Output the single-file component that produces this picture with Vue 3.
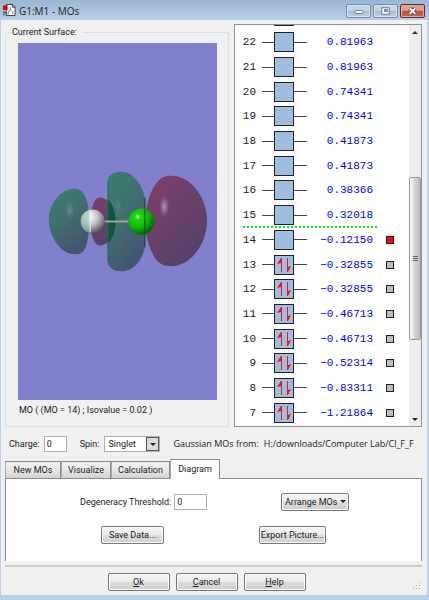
<template>
  <div class="window">
    <header class="titlebar">
      <svg class="app-icon" viewBox="0 0 14 14" aria-hidden="true">
        <path d="M3.500 1h7l2.500 2.500v9.500h-9.500z" fill="#fff" stroke="#333" />
        <path d="M10 1v3h3" fill="none" stroke="#333" />
        <path d="M8 4v3l-2.500 2v3M8 7l2.500 2v3" fill="none" stroke="#777" />
        <path d="M0 2h5v5h-5z" fill="#e00000" />
        <path d="M1 8v5M2 10h2" stroke="#333" />
      </svg>
      <h1 class="title">G1:M1 - MOs</h1>
      <div class="controls">
        <button type="button" class="control" aria-label="Minimize">
          <svg viewBox="0 0 24 13"><rect x="8" y="6" width="9" height="3" rx="1" fill="#fff" stroke="#666f7a" /></svg>
        </button>
        <button type="button" class="control" aria-label="Maximize">
          <svg viewBox="0 0 24 13">
            <rect x="8" y="3" width="8" height="7" fill="#fff" stroke="#666f7a" />
            <rect x="11" y="5" width="3" height="2" fill="#9fb3c8" stroke="#666f7a" />
          </svg>
        </button>
        <button type="button" class="control close" aria-label="Close">
          <svg viewBox="0 0 24 13">
            <path d="M9 3.500l6 6M15 3.500l-6 6" stroke="#5b3a3a" stroke-width="4" />
            <path d="M9 3.500l6 6M15 3.500l-6 6" stroke="#fff" stroke-width="2" />
          </svg>
        </button>
      </div>
    </header>

    <main class="body">
      <div class="top">
        <fieldset class="surface">
          <legend>Current Surface:</legend>
          <svg class="canvas" viewBox="0 0 200 356" role="img" aria-label="Molecular orbital surface">
            <defs>
              <linearGradient id="green" x1="0" y1="0" x2="0.500" y2="1">
                <stop offset="0" stop-color="#397f6a" />
                <stop offset="0.500" stop-color="#40706f" />
                <stop offset="1" stop-color="#435570" />
              </linearGradient>
              <linearGradient id="pink" x1="0" y1="0" x2="0.700" y2="1">
                <stop offset="0" stop-color="#823d68" />
                <stop offset="0.500" stop-color="#6b4069" />
                <stop offset="1" stop-color="#51426a" />
              </linearGradient>
              <radialGradient id="shine">
                <stop offset="0" stop-color="#b3aed0" stop-opacity="0.800" />
                <stop offset="1" stop-color="#9a8fb5" stop-opacity="0" />
              </radialGradient>
              <radialGradient id="white-ball" cx="0.380" cy="0.300" r="0.750">
                <stop offset="0" stop-color="#ffffff" />
                <stop offset="0.450" stop-color="#c4c4c4" />
                <stop offset="1" stop-color="#4c4950" />
              </radialGradient>
              <radialGradient id="green-ball" cx="0.360" cy="0.320" r="0.750">
                <stop offset="0" stop-color="#b8ff9c" />
                <stop offset="0.150" stop-color="#20d515" />
                <stop offset="0.550" stop-color="#10b80a" />
                <stop offset="1" stop-color="#075306" />
              </radialGradient>
              <clipPath id="mid-lobe">
                <path d="M90 137C92 130 97 128 104 128C117 128 128 145 128 161V196C128 215 117 228 104 228C96 228 91 225 90 218Z" />
              </clipPath>
            </defs>
            <path d="M57 145C65 145 68 152 70 160C72 170 72 186 70 196C68 207 65 211 57 211C43 211 31 193 31 176C31 160 43 145 57 145Z" fill="url(#green)" />
            <path d="M82 154C91 154 98 165 98 178S91 202 82 202C76 202 73 190 73 178S76 154 82 154Z" fill="url(#pink)" />
            <path d="M90 137C92 130 97 128 104 128C117 128 128 145 128 161V196C128 215 117 228 104 228C96 228 91 225 90 218Z" fill="url(#green)" />
            <g clip-path="url(#mid-lobe)">
              <ellipse cx="84" cy="178" rx="14" ry="25" fill="#0c563b" />
              <path d="M90 137V218" stroke="#087044" stroke-width="2" />
            </g>
            <path d="M154 132C174 132 190 154 190 177C190 201 173 223 154 223C144 223 140 219 136 212C131 201 128 193 128 178C128 165 132 149 138 141C143 134 147 132 154 132Z" fill="url(#pink)" />
            <ellipse cx="52" cy="167" rx="5" ry="9" fill="url(#shine)" opacity="0.500" />
            <ellipse cx="147" cy="163" rx="5" ry="11" fill="url(#shine)" />
            <ellipse cx="101" cy="163" rx="5" ry="12" fill="url(#shine)" opacity="0.200" />
            <path d="M87 178h24" stroke="#a1a596" stroke-width="2" />
            <circle cx="75" cy="178" r="12" fill="url(#white-ball)" />
            <path d="M72 166.500A12 12 0 0 0 72 189.500Z" fill="#87c4ad" opacity="0.550" />
            <path d="M72.500 167v22" stroke="#d8ffff" />
            <circle cx="124" cy="178" r="13" fill="url(#green-ball)" />
            <path d="M127.500 154v50" stroke="#0b4b2b" />
          </svg>
          <p class="caption">MO ( (MO = 14) ; Isovalue = 0.02 )</p>
        </fieldset>

        <section class="levels" aria-label="Orbital energies">
          <div class="rows">
            <div class="cut-off"></div>
            <div
              v-for="mo in orbitals"
              :key="mo.id"
              class="row"
              :class="{ lumo: mo.id === 15 }"
            >
              <span class="number">{{ mo.id }}</span>
              <span class="level">
                <span class="box">
                  <svg v-if="mo.id < 14" viewBox="0 0 18 18" aria-hidden="true">
                    <path d="M6 16V2h1v14zM6 2v5l-4 1z" />
                    <path d="M12 2v14h1V2zM13 16v-5l3-1z" />
                  </svg>
                </span>
              </span>
              <span class="energy">{{ mo.energy }}</span>
              <button
                v-if="mo.id <= 14"
                type="button"
                class="marker"
                :class="{ active: mo.id === 14 }"
                :aria-label="`Show orbital ${mo.id}`"
              ></button>
            </div>
          </div>
          <div class="scrollbar">
            <span class="arrow up"></span>
            <div class="track">
              <div class="thumb"><i></i><i></i><i></i></div>
            </div>
            <span class="arrow down"></span>
          </div>
        </section>
      </div>

      <div class="settings">
        <label for="charge">Charge:</label>
        <input id="charge" v-model="charge" class="field charge" type="text" />
        <label for="spin">Spin:</label>
        <div class="select">
          <select id="spin" v-model="spin">
            <option>Singlet</option>
            <option>Triplet</option>
          </select>
          <span class="drop"></span>
        </div>
        <p class="source"><span>Gaussian MOs from:</span><span>H:/downloads/Computer Lab/Cl_F_F</span></p>
      </div>

      <nav class="tabs" role="tablist">
        <button
          v-for="tab in tabs"
          :key="tab"
          type="button"
          role="tab"
          class="tab"
          :class="{ selected: tab === current }"
          :aria-selected="tab === current"
          @click="current = tab"
        >{{ tab }}</button>
      </nav>

      <section class="panel" role="tabpanel">
        <div class="line">
          <label for="threshold">Degeneracy Threshold:</label>
          <input id="threshold" v-model="threshold" class="field threshold" type="text" />
          <button type="button" class="button arrange">Arrange MOs <span class="caret"></span></button>
        </div>
        <div class="line actions">
          <button type="button" class="button save">Save Data...</button>
          <button type="button" class="button export">Export Picture...</button>
        </div>
      </section>

      <footer class="footer">
        <button type="button" class="button"><u>O</u>k</button>
        <button type="button" class="button"><u>C</u>ancel</button>
        <button type="button" class="button"><u>H</u>elp</button>
        <svg class="grip" viewBox="0 0 8 8" aria-hidden="true">
          <path d="M6 0h1v1h-1zM3 3h1v1h-1zM6 3h1v1h-1zM0 6h1v1h-1zM3 6h1v1h-1zM6 6h1v1h-1z" fill="#aaa" />
        </svg>
      </footer>
    </main>
  </div>
</template>

<script setup>
import { ref } from 'vue'

const charge = ref('0')
const spin = ref('Singlet')
const threshold = ref('0')
const tabs = ['New MOs', 'Visualize', 'Calculation', 'Diagram']
const current = ref('Diagram')

const orbitals = [
  { id: 22, energy: '0.81963' },
  { id: 21, energy: '0.81963' },
  { id: 20, energy: '0.74341' },
  { id: 19, energy: '0.74341' },
  { id: 18, energy: '0.41873' },
  { id: 17, energy: '0.41873' },
  { id: 16, energy: '0.38366' },
  { id: 15, energy: '0.32018' },
  { id: 14, energy: '−0.12150' },
  { id: 13, energy: '−0.32855' },
  { id: 12, energy: '−0.32855' },
  { id: 11, energy: '−0.46713' },
  { id: 10, energy: '−0.46713' },
  { id: 9, energy: '−0.52314' },
  { id: 8, energy: '−0.83311' },
  { id: 7, energy: '−1.21864' }
]
</script>

<style>
body {
  background: #b9d1ea;
}
</style>

<style scoped>
* {
  box-sizing: border-box;
}

.window {
  display: flex;
  flex-direction: column;
  min-height: 100vh;
  padding: 0 2px 5px 1px;
  background: #b9d1ea;
  font-family: Roboto, "Liberation Sans", Arial, sans-serif;
  font-size: 9px;
  line-height: 12px;
  color: #222;
}

button,
input,
select {
  margin: 0;
  padding: 0;
  font: inherit;
  color: inherit;
}

.titlebar {
  display: flex;
  align-items: center;
  height: 20px;
  margin: 0 -2px 0 -1px;
  padding: 0 3px;
  background: linear-gradient(#9bb6d1, #b8cfe8);
}

.app-icon {
  width: 13px;
  height: 14px;
}

.title {
  flex: 1;
  margin: 2px 0 0 3px;
  font: 10px/14px "Open Sans", sans-serif;
}

.controls {
  display: flex;
  gap: 2px;
  padding-top: 2px;
  margin-right: 1px;
}

.control {
  width: 25px;
  height: 14px;
  border: 1px solid #7589a0;
  border-radius: 2px;
  background: linear-gradient(#c5d6e8 45%, #a3bbd3 50%, #bbcfe4);
  box-shadow: inset 0 0 0 1px #d7e3ef;
}

.control svg {
  display: block;
  width: 100%;
  height: 100%;
}

.close {
  border-color: #6b2a24;
  background: linear-gradient(#dba193 45%, #c14a33 50%, #cf6b50);
  box-shadow: inset 0 0 0 1px #e2a99c;
}

.body {
  display: flex;
  flex: 1;
  flex-direction: column;
  padding: 4px 5px 0 4px;
  background: #f0f0f0;
}

.top {
  display: grid;
  grid-template-columns: minmax(0, 224fr) minmax(0, 188fr);
  gap: 5px;
  height: 403px;
}

.surface {
  display: flex;
  flex-direction: column;
  min-width: 0;
  margin: 2px 0 0;
  padding: 5px 11px 10px 12px;
  border: 1px solid #d7e0e6;
  border-radius: 2px;
}

.surface legend {
  margin-left: -6px;
  padding: 0 6px 0 0;
}

.canvas {
  flex: 1;
  width: 100%;
  min-height: 0;
  background: #8080cc;
}

.caption {
  margin: 4px 0 0 1px;
  white-space: nowrap;
}

.levels {
  display: flex;
  min-width: 0;
  border: 1px solid #8e929c;
  background: #fff;
}

.rows {
  display: flex;
  flex: 1;
  flex-direction: column;
  padding-bottom: 1px;
}

.cut-off {
  flex: none;
  width: 20px;
  height: 5px;
  margin-left: 39px;
  border-top: 1px solid #222;
}

.row {
  position: relative;
  display: flex;
  flex: 1;
  align-items: center;
  font-family: "Liberation Mono", monospace;
  font-size: 11px;
}

.lumo::after {
  content: '';
  position: absolute;
  bottom: 0;
  left: 8px;
  width: 135px;
  height: 2px;
  background: repeating-linear-gradient(90deg, #00f000 0 2px, #fff 2px 4px);
}

.number {
  width: 21px;
  text-align: right;
}

.level {
  width: 45px;
  margin-left: 6px;
  padding-left: 12px;
  background: linear-gradient(#444, #444) center / 100% 1px no-repeat;
}

.box {
  display: block;
  width: 20px;
  height: 20px;
  border: 1px solid #222;
  background: #9fbedf;
}

.box svg {
  display: block;
}

.box path {
  fill: #f50f18;
}

.energy {
  width: 66px;
  color: #0000ff;
  text-align: right;
}

.marker {
  width: 8px;
  height: 8px;
  margin-left: 13px;
  border: 1px solid #222;
  background: #bbb;
}

.active {
  background: #f00;
}

.scrollbar {
  display: flex;
  flex-direction: column;
  width: 12px;
  background: #eee;
}

.arrow {
  display: flex;
  align-items: center;
  justify-content: center;
  height: 14px;
}

.arrow::before,
.drop::before,
.caret {
  content: '';
  border: 3px solid transparent;
  border-top: 3px solid #222;
  border-bottom: 0;
}

.up::before {
  border-top: 0;
  border-bottom: 3px solid #333;
}

.track {
  flex: 1;
  padding-top: 138px;
}

.thumb {
  display: flex;
  flex-direction: column;
  gap: 1px;
  align-items: center;
  justify-content: center;
  height: 163px;
  border: 1px solid #999;
  border-radius: 2px;
  background: linear-gradient(90deg, #fafafa, #d4d4d4 50%, #bbb);
}

.thumb i {
  width: 5px;
  height: 1px;
  background: #666;
}

.settings {
  display: flex;
  align-items: center;
  height: 16px;
  margin-top: 9px;
  padding-left: 4px;
}

.field {
  height: 16px;
  padding: 0 2px;
  border: 1px solid #aaafb8;
  background: #fff;
}

.charge {
  width: 23px;
  margin: 0 13px 0 4px;
}

.select {
  position: relative;
  width: 56px;
  height: 16px;
  margin-left: 5px;
}

.select select {
  width: 100%;
  height: 100%;
  padding-left: 3px;
  border: 1px solid #aaafb8;
  border-radius: 0;
  background: #fff;
  appearance: none;
}

.drop {
  position: absolute;
  top: 1px;
  right: 1px;
  display: flex;
  align-items: center;
  justify-content: center;
  width: 13px;
  height: 14px;
  border: 1px solid #555;
  background: #ddd;
  pointer-events: none;
}

.source {
  display: flex;
  flex: 1;
  gap: 5px;
  min-width: 0;
  margin: 0 3px 0 13px;
  overflow: hidden;
  font-family: "Open Sans", sans-serif;
  font-size: 9px;
  white-space: nowrap;
}

.tabs {
  display: flex;
  align-items: flex-end;
  height: 20px;
  margin-top: 7px;
}

.tab {
  width: 50px;
  height: 18px;
  border: 1px solid #898c95;
  border-left-color: #aaa;
  background: linear-gradient(#f2f2f2, #e8e8e8 50%, #d2d2d2);
}

.tab:first-child {
  width: 56px;
}

.tab:nth-child(3) {
  width: 59px;
}

.tab.selected {
  z-index: 1;
  height: 20px;
  padding-bottom: 2px;
  border-bottom: 0;
  background: #fff;
}

.panel {
  height: 83px;
  margin-top: -1px;
  padding-top: 14px;
  border: 1px solid #898c95;
  border-bottom: 0;
  background: #fff;
}

.line {
  display: flex;
  align-items: center;
  height: 18px;
  padding-left: 74px;
}

.threshold {
  width: 33px;
  margin-left: 3px;
}

.actions {
  margin-top: 15px;
  padding-left: 95px;
}

.button {
  height: 18px;
  border: 1px solid #777;
  border-radius: 2px;
  background: linear-gradient(#f4f4f4, #ebebeb 48%, #dcdcdc 52%, #cfcfcf);
  box-shadow: inset 0 0 0 1px #fafafa;
  white-space: nowrap;
}

.arrange {
  width: 68px;
  margin-left: 74px;
}

.caret {
  display: inline-block;
  vertical-align: 2px;
}

.save {
  width: 63px;
}

.export {
  width: 67px;
  margin-left: 95px;
}

.footer {
  position: relative;
  display: flex;
  gap: 6px;
  justify-content: center;
  margin-top: 4px;
  padding: 6px 14px 4px 0;
  border-top: 2px solid #ccc;
}

.footer .button {
  width: 62px;
}

.grip {
  position: absolute;
  right: 1px;
  bottom: 5px;
  width: 8px;
  height: 8px;
}
</style>
